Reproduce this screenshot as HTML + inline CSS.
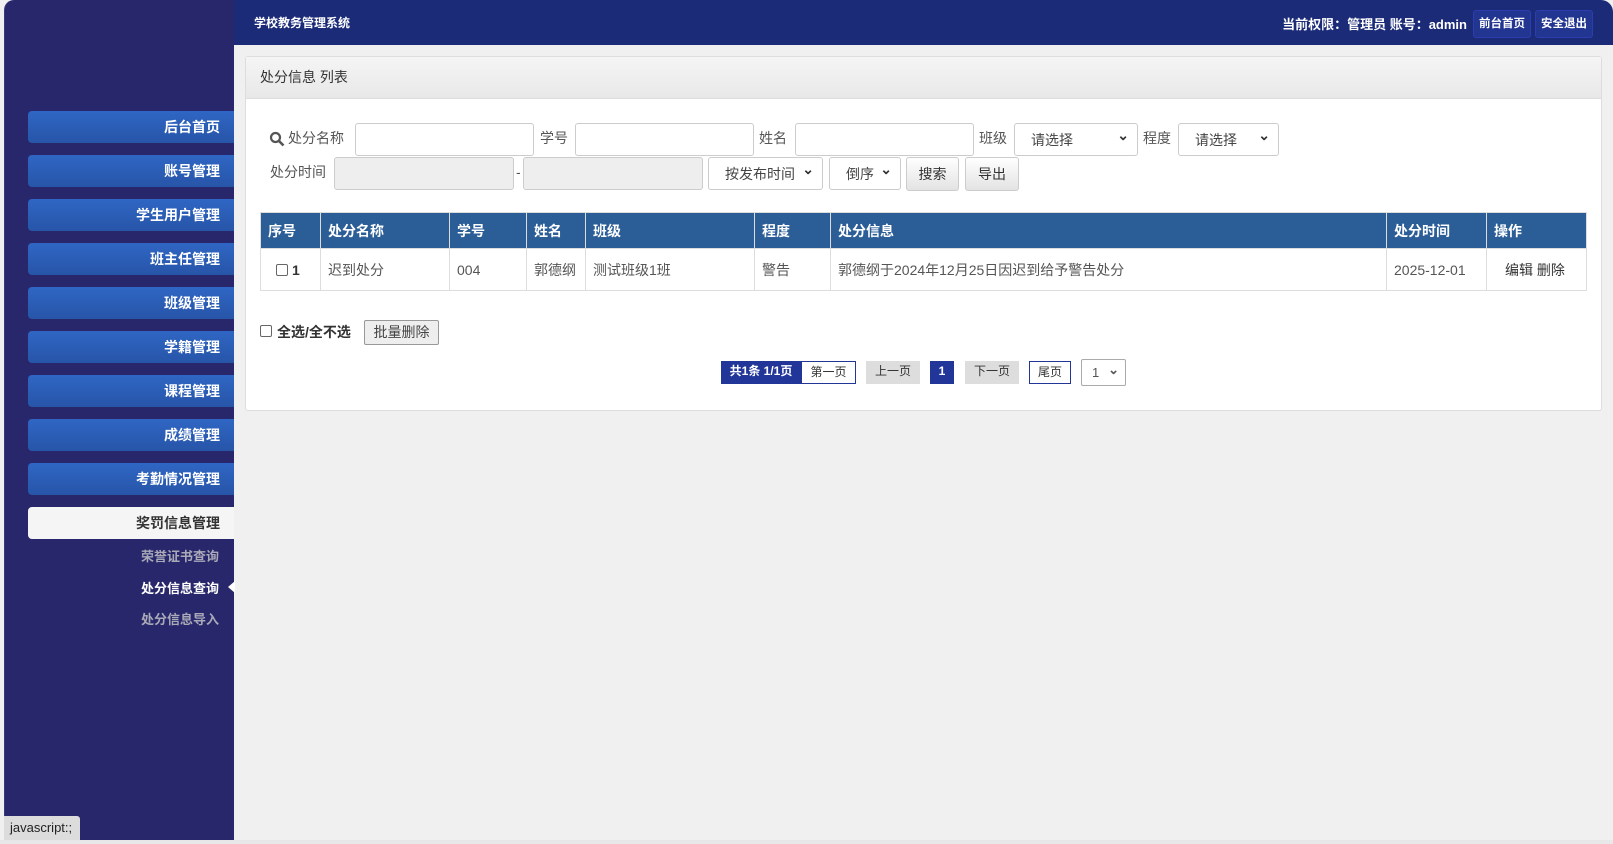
<!DOCTYPE html>
<html><head><meta charset="utf-8"><style>
*{box-sizing:border-box;margin:0;padding:0}
body{width:1613px;height:844px;background:#f0f0f0;font-family:"Liberation Sans","Noto Sans CJK SC",sans-serif;font-size:14px;color:#555;position:relative;overflow:hidden}
.side{position:absolute;left:4px;top:0;width:230px;height:840px;background:#28276b;border-top-left-radius:10px;border-left:1px solid #3a3a80}
.top{position:absolute;left:234px;top:0;width:1379px;height:45px;background:#1b2b78;border-top-right-radius:12px}
.top .t{position:absolute;left:20px;top:14px;color:#fff;font-weight:bold;font-size:12px}
.top .r{position:absolute;right:146px;top:14px;color:#fff;font-size:13px;font-weight:bold;white-space:nowrap}
.tb{position:absolute;top:10px;height:28px;background:#223591;border:1px solid #2c3db0;border-radius:3px;color:#fff;font-size:11.5px;font-weight:bold;line-height:26px;text-align:center}
.m{position:absolute;left:28px;width:206px;height:32px;background:linear-gradient(#2f66c4,#2755a8);border-radius:4px 0 0 4px;color:#fff;font-weight:bold;font-size:14px;text-align:right;padding-right:14px;line-height:32px}
.m.on{background:#f5f5f5;color:#333}
.s{position:absolute;left:28px;width:191px;text-align:right;color:#a9a9b8;font-size:13px;font-weight:bold}
.panel{position:absolute;left:245px;top:56px;width:1357px;height:355px;background:#fff;border:1px solid #ddd;border-radius:3px}
.ph{height:42px;background:linear-gradient(#f5f5f5,#e8e8e8);border-bottom:1px solid #ddd;padding-left:14px;line-height:40px;color:#333;font-size:14px}
.a{position:absolute}
.inp{position:absolute;height:33px;border:1px solid #ccc;border-radius:3px;background:#fff}
.g{background:#eee}
.sel{position:absolute;height:33px;border:1px solid #ccc;border-radius:3px;background:#fff;color:#444;font-size:14px;line-height:33px;padding-left:16px}
.sel:after{content:"⌄";position:absolute;right:8px;top:-5px;font-size:14px;color:#333;font-weight:bold}
.btn{position:absolute;height:34px;border:1px solid #ccc;border-radius:3px;background:linear-gradient(#fff,#e3e3e3);color:#333;text-align:center;line-height:32px}
table{position:absolute;left:260px;top:212px;width:1327px;border-collapse:collapse;font-size:14px}
th{background:#2b5d97;color:#fff;text-align:left;height:36px;padding-left:7px;border:1px solid #ddd;font-weight:bold}
td{height:42px;padding-left:7px;border:1px solid #ddd;color:#555}
.pg{position:absolute;top:361px;height:23px;line-height:21px;font-size:12px;text-align:center;color:#333}
</style></head><body>
<div class="side"></div>
<div class="top"><div class="t">学校教务管理系统</div><div class="r">当前权限：管理员 账号：admin</div>
<div class="tb" style="left:1239px;width:58px">前台首页</div><div class="tb" style="left:1301px;width:58px">安全退出</div></div>
<div class="m" style="top:111px">后台首页</div>
<div class="m" style="top:155px">账号管理</div>
<div class="m" style="top:199px">学生用户管理</div>
<div class="m" style="top:243px">班主任管理</div>
<div class="m" style="top:287px">班级管理</div>
<div class="m" style="top:331px">学籍管理</div>
<div class="m" style="top:375px">课程管理</div>
<div class="m" style="top:419px">成绩管理</div>
<div class="m" style="top:463px">考勤情况管理</div>
<div class="m on" style="top:507px">奖罚信息管理</div>
<div class="s" style="top:546px">荣誉证书查询</div>
<div class="s" style="top:578px;color:#fff">处分信息查询</div>
<div class="a" style="left:228px;top:581px;width:0;height:0;border-top:6px solid transparent;border-bottom:6px solid transparent;border-right:7px solid #fff"></div>
<div class="s" style="top:609px">处分信息导入</div>
<div class="panel"><div class="ph">处分信息 列表</div></div>
<svg class="a" style="left:269px;top:131px" width="16" height="16" viewBox="0 0 16 16"><circle cx="6.5" cy="6.5" r="4.5" fill="none" stroke="#555" stroke-width="2.2"/><path d="M10 10l4.5 4.5" stroke="#555" stroke-width="2.6"/></svg>
<div class="a" style="left:288px;top:128px">处分名称</div>
<div class="inp" style="left:355px;top:123px;width:179px"></div>
<div class="a" style="left:540px;top:128px">学号</div>
<div class="inp" style="left:575px;top:123px;width:179px"></div>
<div class="a" style="left:759px;top:128px">姓名</div>
<div class="inp" style="left:795px;top:123px;width:179px"></div>
<div class="a" style="left:979px;top:128px">班级</div>
<div class="sel" style="left:1014px;top:123px;width:124px">请选择</div>
<div class="a" style="left:1143px;top:128px">程度</div>
<div class="sel" style="left:1178px;top:123px;width:101px">请选择</div>
<div class="a" style="left:270px;top:162px">处分时间</div>
<div class="inp g" style="left:334px;top:157px;width:180px"></div>
<div class="a" style="left:516px;top:164px">-</div>
<div class="inp g" style="left:523px;top:157px;width:180px"></div>
<div class="sel" style="left:708px;top:157px;width:115px">按发布时间</div>
<div class="sel" style="left:829px;top:157px;width:72px">倒序</div>
<div class="btn" style="left:906px;top:157px;width:53px">搜索</div>
<div class="btn" style="left:965px;top:157px;width:54px">导出</div>
<table><tr><th style="width:60px">序号</th><th style="width:129px">处分名称</th><th style="width:77px">学号</th><th style="width:59px">姓名</th><th style="width:169px">班级</th><th style="width:76px">程度</th><th style="width:556px">处分信息</th><th style="width:100px">处分时间</th><th>操作</th></tr>
<tr><td style="padding-left:15px;color:#333;font-weight:bold"><span style="display:inline-block;width:12px;height:12px;border:1px solid #666;border-radius:2px;vertical-align:-1px;margin-right:4px"></span>1</td><td>迟到处分</td><td>004</td><td>郭德纲</td><td>测试班级1班</td><td>警告</td><td>郭德纲于2024年12月25日因迟到给予警告处分</td><td>2025-12-01</td><td style="padding-left:18px;color:#333">编辑 删除</td></tr></table>
<span class="a" style="left:260px;top:325px;width:12px;height:12px;border:1px solid #666;border-radius:2px"></span>
<div class="a" style="left:277px;top:322px;color:#333;font-weight:bold">全选/全不选</div>
<div class="a" style="left:364px;top:320px;width:75px;height:25px;border:1px solid #999;border-radius:2px;background:#eee;text-align:center;line-height:23px;color:#444">批量删除</div>
<div class="pg" style="left:721px;width:80px;background:#22369a;color:#fff;font-weight:bold">共1条 1/1页</div>
<div class="pg" style="left:801px;width:55px;border:1px solid #22369a">第一页</div>
<div class="pg" style="left:866px;width:54px;background:#ddd">上一页</div>
<div class="pg" style="left:930px;width:24px;background:#22369a;color:#fff;font-weight:bold">1</div>
<div class="pg" style="left:965px;width:54px;background:#ddd">下一页</div>
<div class="pg" style="left:1029px;width:42px;border:1px solid #22369a">尾页</div>
<div class="a" style="left:1081px;top:359px;width:45px;height:27px;border:1px solid #aaa;border-radius:2px;font-size:13px;line-height:25px;padding-left:10px;color:#555">1<span style="position:absolute;right:6px;top:-3px;font-weight:bold">⌄</span></div>
<div class="a" style="left:4px;top:816px;width:76px;height:24px;background:#dcdcdc;border-top-right-radius:3px;color:#222;font-size:13px;line-height:24px;padding-left:6px">javascript:;</div>
<div class="a" style="left:0;top:840px;width:1613px;height:4px;background:#e8e8e8"></div>
</body></html>
